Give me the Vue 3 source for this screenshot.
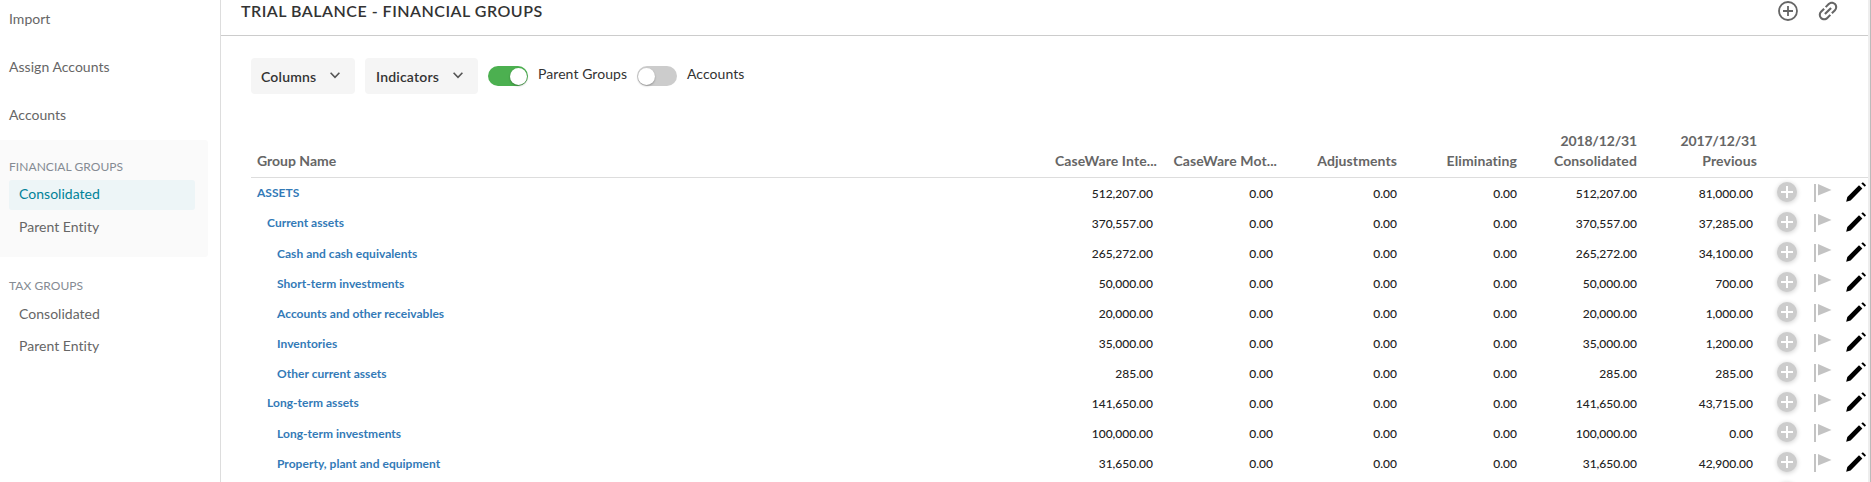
<script setup>
const navTop = ['Import', 'Assign Accounts', 'Accounts']
const sections = [
  { title: 'FINANCIAL GROUPS', items: ['Consolidated', 'Parent Entity'], open: true },
  { title: 'TAX GROUPS', items: ['Consolidated', 'Parent Entity'], open: false },
]
const columns = [
  { label: 'CaseWare Inte...', inset: true },
  { label: 'CaseWare Mot...', inset: true },
  { label: 'Adjustments' },
  { label: 'Eliminating' },
  { date: '2018/12/31', label: 'Consolidated' },
  { date: '2017/12/31', label: 'Previous', inset: true },
]
const z = '0.00'
const rows = [
  { name: 'ASSETS', level: 0, v: ['512,207.00', z, z, z, '512,207.00', '81,000.00'] },
  { name: 'Current assets', level: 1, v: ['370,557.00', z, z, z, '370,557.00', '37,285.00'] },
  { name: 'Cash and cash equivalents', level: 2, v: ['265,272.00', z, z, z, '265,272.00', '34,100.00'] },
  { name: 'Short-term investments', level: 2, v: ['50,000.00', z, z, z, '50,000.00', '700.00'] },
  { name: 'Accounts and other receivables', level: 2, v: ['20,000.00', z, z, z, '20,000.00', '1,000.00'] },
  { name: 'Inventories', level: 2, v: ['35,000.00', z, z, z, '35,000.00', '1,200.00'] },
  { name: 'Other current assets', level: 2, v: ['285.00', z, z, z, '285.00', '285.00'] },
  { name: 'Long-term assets', level: 1, v: ['141,650.00', z, z, z, '141,650.00', '43,715.00'] },
  { name: 'Long-term investments', level: 2, v: ['100,000.00', z, z, z, '100,000.00', z] },
  { name: 'Property, plant and equipment', level: 2, v: ['31,650.00', z, z, z, '31,650.00', '42,900.00'] },
  { name: '', level: 2, v: ['', '', '', '', '', ''] },
]
</script>

<template>
  <div class="app">
    <aside class="sidebar">
      <nav class="nav-top">
        <a v-for="n in navTop" :key="n">{{ n }}</a>
      </nav>
      <section v-for="s in sections" :key="s.title" class="section" :class="{ open: s.open }">
        <h2>{{ s.title }}</h2>
        <a v-for="(i, k) in s.items" :key="i" :class="{ active: s.open && k === 0 }">{{ i }}</a>
      </section>
    </aside>

    <main class="main">
      <header class="header">
        <h1>TRIAL BALANCE - FINANCIAL GROUPS</h1>
        <div class="header-icons">
          <svg width="20" height="20" viewBox="0 0 20 20" fill="none" stroke="#666" stroke-width="1.8">
            <circle cx="10" cy="10" r="9" /><path d="M10 5v10M5 10h10" />
          </svg>
          <svg class="link" width="26" height="26" viewBox="0 0 24 24" fill="#666">
            <path transform="rotate(-45 12 12)" d="M3.9 12c0-1.71 1.39-3.1 3.1-3.1h4V7H7c-2.76 0-5 2.24-5 5s2.24 5 5 5h4v-1.9H7c-1.71 0-3.1-1.39-3.1-3.1zM8 13h8v-2H8v2zm9-6h-4v1.9h4c1.71 0 3.1 1.39 3.1 3.1s-1.39 3.1-3.1 3.1h-4V17h4c2.76 0 5-2.24 5-5s-2.24-5-5-5z" />
          </svg>
        </div>
      </header>

      <div class="toolbar">
        <button class="drop columns">Columns
          <svg width="10" height="7" viewBox="0 0 10 7" fill="none" stroke="#555" stroke-width="1.6"><path d="M.6 .8 5 5.4 9.4 .8" /></svg>
        </button>
        <button class="drop">Indicators
          <svg width="10" height="7" viewBox="0 0 10 7" fill="none" stroke="#555" stroke-width="1.6"><path d="M.6 .8 5 5.4 9.4 .8" /></svg>
        </button>
        <span class="toggle on"><i></i></span><label class="first">Parent Groups</label>
        <span class="toggle"><i></i></span><label>Accounts</label>
      </div>

      <div class="table">
        <div class="row head">
          <div class="name">Group Name</div>
          <div v-for="c in columns" :key="c.label" class="col"><span v-if="c.date" class="date">{{ c.date }}</span><span>{{ c.label }}</span></div>
        </div>
        <div v-for="(r, n) in rows" :key="n" class="row">
          <div class="name" :class="'level' + r.level">{{ r.name }}</div>
          <div v-for="(v, k) in r.v" :key="k" class="num" :class="{ inset: columns[k].inset }">{{ v }}</div>
          <div class="actions">
            <span class="add"><svg width="20" height="20" viewBox="0 0 20 20" stroke="#fff" stroke-width="2"><path d="M10 4v12M4 10h12" /></svg></span>
            <svg class="flag" width="18" height="18" viewBox="0 0 18 18" fill="#c3c3c3"><path d="M0 0h2v18H0zM4 0 17.5 6 4 11.5z" /></svg>
            <svg class="pencil" width="20" height="20" viewBox="0 0 20 20"><path d="M.2 19.8 1.3 15 13 3.2 16.4 6.4 4.6 18.4zM15.3 1.5 16.9.2 20 3.2 18.8 4.8z" /></svg>
          </div>
        </div>
      </div>
    </main>
    <div class="edge"></div>
  </div>
</template>

<style>
body { overflow: hidden; background: #fff; }
</style>

<style scoped>
* { box-sizing: border-box; }
.app {
  display: flex;
  height: 482px;
  overflow: hidden;
  font-family: Lato, "Liberation Sans", sans-serif;
  font-size: 14px;
  font-variant-ligatures: none;
  color: #333;
}
.sidebar { width: 221px; flex: none; border-right: 1px solid #ddd; color: #666; }
.sidebar a { display: block; font-size: 14px; letter-spacing: .03px; }
.nav-top { height: 140px; overflow: hidden; }
.nav-top a { height: 48px; line-height: 48px; padding-left: 9px; }
.nav-top a:first-child { margin-top: -5px; }
.section { width: 208px; height: 117px; padding: 20px 13px 0 9px; border-radius: 0 3px 3px 0; }
.section.open { background: #fafafa; }
.section h2 { margin: 0; height: 20px; line-height: 13px; font-size: 12px; font-weight: 400; color: #858b93; letter-spacing: .05px; }
.section a { height: 30px; line-height: 28px; padding-left: 10px; margin-bottom: 3px; border-radius: 3px; }
.section:not(.open) { padding-top: 22px; }
.section:not(.open) h2 { height: 21px; line-height: 14px; }
.section:not(.open) a { margin-bottom: 2px; }
.section .active { background: #edf5f7; color: #008299; }
.main { flex: 1; min-width: 0; }
.header { display: flex; justify-content: space-between; height: 36px; border-bottom: 1px solid #ccc; padding: 0 27px 0 20px; }
.header h1 { margin: 0; font-size: 16px; line-height: 22px; font-weight: 600; letter-spacing: .5px; }
.header-icons { display: flex; gap: 17px; padding-top: 1px; }
.link { margin-top: -3px; }
.toolbar { display: flex; height: 87px; padding: 22px 0 0 30px; }
.drop {
  display: flex; justify-content: space-between; width: 113px; height: 36px; margin-right: 10px;
  padding: 0 15px 0 11px; border: 0; border-radius: 4px; background: #f5f5f5; color: #333;
  font: 600 14px/38px Lato, sans-serif; letter-spacing: .2px;
}
.drop.columns { width: 104px; padding-left: 10px; }
.drop svg { margin-top: 14px; }
.toggle { width: 40px; height: 20px; margin-top: 8px; border-radius: 10px; background: #ccc; padding: 1.5px 1px; }
.toggle i { display: block; width: 17px; height: 17px; border-radius: 50%; background: #fff; box-shadow: 0 1px 2px rgba(0, 0, 0, .3); }
.toggle.on { background: #4cb050; }
.toggle.on i { margin-left: 21px; }
.toolbar label { margin-left: 10px; font-size: 14px; line-height: 32px; letter-spacing: .07px; }
.toolbar .first { width: 92px; white-space: nowrap; margin-right: 7px; }
.table { margin-left: 30px; }
.row { display: grid; grid-template-columns: 1fr repeat(6, 120px) 101px; height: 30px; }
.head { height: 55px; border-bottom: 1px solid #ddd; color: #666; font-size: 14px; font-weight: 700; line-height: 20px; align-items: end; padding-bottom: 6px; letter-spacing: .1px; }
.head .name { letter-spacing: 0; }
.date { letter-spacing: -.15px; }
.col { display: flex; flex-direction: column; text-align: right; padding-right: 10px; white-space: nowrap; }
.name { padding-left: 6px; }
.row:not(.head) .name { color: #337ab7; font-size: 12px; font-weight: 700; line-height: 29px; letter-spacing: .03px; }
.row .level1.name { padding-left: 16px; }
.row .level2.name { padding-left: 26px; padding-top: 1px; }
.num { text-align: right; padding-right: 10px; font-size: 12px; font-weight: 500; line-height: 32px; color: #222; }
.num.inset { padding-right: 14px; }
.actions { display: flex; padding-left: 10px; }
.add { width: 20px; height: 20px; margin-top: 4px; border-radius: 50%; background: #ccc; box-shadow: 0 1px 5px rgba(0, 0, 0, .2); }
.add svg { display: block; }
.flag { margin: 6px 0 0 17px; }
.pencil { margin: 4px 0 0 14px; }
.edge { width: 3px; flex: none; background: #eee; border-right: 1px solid #bbb; }
</style>
